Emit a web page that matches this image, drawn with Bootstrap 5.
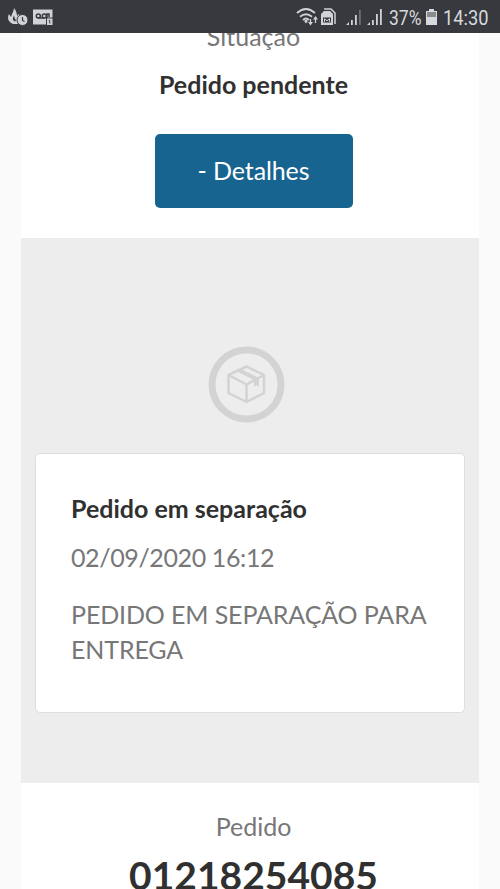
<!DOCTYPE html>
<html lang="pt-BR">
<head>
<meta charset="utf-8">
<meta name="viewport" content="width=device-width, initial-scale=1">
<title>Pedido</title>
<link rel="stylesheet" href="https://cdn.jsdelivr.net/npm/bootstrap@5.3.0/dist/css/bootstrap.min.css">
<style>
body{font-family:Lato,sans-serif;font-size:25px;line-height:35px;background:#fafafa;color:#777;height:889px}
.statusbar{height:33px;background:#37393e;color:#d8d9dc;padding:0 11px 0 8px}
.statusbar svg{display:block;flex:none}
.page{width:458px;height:856px}
.summary{height:205px;padding-left:7px}
.state-label{margin-top:-14px}
.state-value{margin-top:13px}
.dark{color:#303030}
.btn-details{width:198px;height:74px;margin-top:32px;font-size:25px;color:#fff;background:#186490;border-radius:5px;letter-spacing:-.1px}
.timeline{height:545px;background:#ededed;padding:108px 14px 0}
.step-icon{margin:0 0 30px 172px}
.step-card{height:260px;border:1px solid #dedede;border-radius:5px;padding:37px 35px 0;color:#777}
.date-row{margin-top:14px;letter-spacing:-.38px}
.message{margin-top:22px;letter-spacing:-.13px}
.order{height:106px;padding:26px 0 0 7px}
.order-number{font-size:39px;line-height:48px;margin-top:7px}
</style>
<script src="https://cdn.jsdelivr.net/npm/bootstrap@5.3.0/dist/js/bootstrap.bundle.min.js"></script>
</head>
<body class="overflow-hidden">
<header class="statusbar d-flex align-items-center">
  <svg width="48" height="20" viewBox="0 0 48 20" fill="#d0d2d5">
    <path d="M6 1C8 4 9 6 9 9l2-2c1 1 1 2 1 3-2 1-3 4-2 7H5C0 15-1 11 1 7l2 3C4 6 6 4 6 1z"/>
    <path d="M6 8.500c-1.500 3-1.500 5 1 6l1-1C7 12 6.500 10.500 6 8.500z" fill="#37393e"/>
    <circle cx="14.500" cy="13" r="5.500" stroke="#37393e"/><path d="M14.500 10v3.500l2 1" fill="none" stroke="#37393e" stroke-width="1.200"/>
    <path d="M25 2.500h19.500V17.500H25z"/>
    <g fill="none" stroke="#37393e" stroke-width="1.500"><circle cx="30.300" cy="9" r="2"/><circle cx="36.300" cy="9" r="2"/><path d="M30.300 11h6M39 11V7h2v3"/></g>
    <path d="M38.500 11h6.500v7.500h-6.500z" stroke="#37393e"/><path d="M40.800 13.500h1v3" fill="none" stroke="#37393e"/>
  </svg>
  <svg class="ms-auto" width="88" height="20" viewBox="0 0 88 20">
    <g fill="none" stroke="#d0d2d5" stroke-width="1.800"><path d="M1 6q9-8 18 0M4 9.800q6-5 12 0M7 13q3-3 6 0"/><path d="M14.500 12v5M19.500 16v-5" stroke-width="1.300"/></g>
    <g fill="#d0d2d5"><path d="M8 14l2-1.500 2 1.500-2 2.500zM12 15h5l-2.500 3.500zM17 12.500h5L19.500 9z"/>
    <path d="M25 7l3-3h6l3 3v11H25z"/><path d="M28 2h7l4 4v11" fill="none" stroke="#d0d2d5" stroke-width="1.500"/></g>
    <path d="M27 10.500h8v5h-8z" fill="#37393e"/><path d="M28.500 14.800v-3l2.500 2 2.500-2v3" fill="none" stroke="#d0d2d5"/>
    <g fill="#d0d2d5"><path d="M53 18v-3l-3 3zM55 13h1.800v5H55zM59 8h1.800v10H59zM74 18v-3l-3 3zM76 13h1.800v5H76zM80 7h1.800v11H80zM84 2h1.800v16H84z"/><path d="M63 3h1.800v15H63z" opacity=".35"/></g>
  </svg>
  <svg width="38" height="24" viewBox="0 0 38 24" fill="#d8d9dc"><text x="5" y="19.500" font-family="Roboto, sans-serif" font-size="20" textLength="32.500" lengthAdjust="spacingAndGlyphs">37%</text></svg>
  <svg width="17" height="20" viewBox="0 0 17 20"><path d="M4 4h3V2h5v2h3v14H4z" fill="#d8d9dc"/><path d="M5 5h9v5H5z" fill="#888a8e"/></svg>
  <svg width="50" height="24" viewBox="0 0 50 24" fill="#d8d9dc"><text x="4" y="19.500" font-family="Roboto, sans-serif" font-size="20" textLength="45.500" lengthAdjust="spacingAndGlyphs">14:30</text></svg>
</header>
<main class="page mx-auto bg-white">
  <section class="summary text-center d-flex flex-column align-items-center overflow-hidden">
    <div class="state-label">Situação</div>
    <div class="fw-bold dark state-value">Pedido pendente</div>
    <button class="btn btn-details border-0 flex-shrink-0" type="button">- Detalhes</button>
  </section>
  <section class="timeline">
    <svg class="step-icon d-block" width="78" height="77" viewBox="0 0 78 77" fill="none" stroke="#d3d3d3">
      <circle cx="39.500" cy="38.500" r="34.500" stroke-width="7"/>
      <path d="M39.500 20.500l17.500 8.500v18L39.500 56 21.500 47V29zM21.500 29l18 9.500L57 29M39.500 38.500V56" stroke-width="2.500" stroke-linejoin="round"/>
      <path d="M30 25.500l4.500-2.300L52 32v9l-2.500-2-2.500 2v-7z" fill="#d3d3d3" stroke="none"/>
    </svg>
    <article class="card step-card">
      <div class="fw-bold dark">Pedido em separação</div>
      <div class="date-row">02/09/2020 16:12</div>
      <div class="message">PEDIDO EM SEPARAÇÃO PARA ENTREGA</div>
    </article>
  </section>
  <section class="order text-center overflow-hidden">
    <div>Pedido</div>
    <div class="order-number fw-bold dark">01218254085</div>
  </section>
</main>
</body>
</html>
